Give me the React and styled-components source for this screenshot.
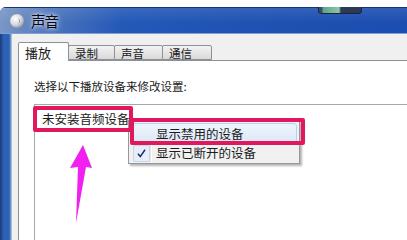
import styled, { createGlobalStyle } from "styled-components";

const GlobalStyle = createGlobalStyle`
  html, body {
    margin: 0;
    padding: 0;
    background: #ffffff;
    overflow: hidden;
  }
  body {
    font-family: "Noto Sans CJK SC", "Noto Sans", sans-serif;
    color: #1b1b1b;
  }
`;

const Page = styled.div`
  position: fixed;
  left: 0;
  top: 0;
  z-index: 1000;
  width: 407px;
  height: 240px;
  overflow: hidden;
  padding-top: 7px;
  box-sizing: border-box;
  background: #ffffff;
`;

const Window = styled.div`
  width: 407px;
  height: 233px;
  display: flex;
  flex-direction: column;
  border-top-left-radius: 6px;
  overflow: hidden;
  background: #1f52b0;
`;

const TitleBar = styled.div`
  position: relative;
  height: 27px;
  flex-shrink: 0;
  display: flex;
  align-items: center;
  gap: 6px;
  padding-left: 9px;
  background:
    linear-gradient(to bottom, rgba(255, 255, 255, 0.1) 0%, rgba(255, 255, 255, 0) 60%),
    linear-gradient(to right, #7a97c6 0%, #4a73bb 13%, #2459b8 30%, #1f52b3 60%, #1c4db0 100%);
  box-shadow: inset 0 1px 0 #16346e, inset 0 -1px 0 #7fa0d0;
`;

const TitleText = styled.span`
  font-size: 14.5px;
  letter-spacing: -1px;
  color: #0a0a12;
  text-shadow: 0 0 6px rgba(235, 240, 250, 0.95), 0 0 3px rgba(235, 240, 250, 0.9);
`;

const Thumb = styled.div`
  position: absolute;
  top: -1px;
  left: 318px;
  width: 42px;
  height: 6px;
  border-radius: 0 0 3px 3px;
  background: linear-gradient(to right, #3b4c66 0, #3b4c66 3px, #5aa58e 4px, #8fc4a6 20px, #2c3a55 22px, #2c3a55 100%);
  border: 1px solid #18243a;
`;

const Frame = styled.div`
  flex: 1;
  display: flex;
`;

const FrameSide = styled.div`
  width: 12px;
  flex-shrink: 0;
  background: linear-gradient(
    to right,
    #1b3a70 0,
    #24509a 2px,
    #2c63b9 4px,
    #2a61b8 9px,
    #7f9cc8 11px,
    #d9dde3 12px
  );
`;

const Body = styled.div`
  flex: 1;
  display: flex;
  flex-direction: column;
  background: #f0f0f0;
  padding: 8px 0 0 6px;
`;

const TabRow = styled.div`
  display: flex;
  align-items: flex-end;
  height: 18px;
  position: relative;
  z-index: 1;
`;

const Tab = styled.div`
  box-sizing: border-box;
  width: ${(p) => p.w}px;
  height: ${(p) => (p.active ? 19 : 15)}px;
  margin-bottom: ${(p) => (p.active ? -1 : 0)}px;
  margin-left: ${(p) => (p.first ? 0 : -1)}px;
  padding-left: 6px;
  display: flex;
  align-items: center;
  border: 1px solid #8d9097;
  border-bottom: ${(p) => (p.active ? "none" : "1px solid #8d9097")};
  border-radius: 2px 2px 0 0;
  font-size: ${(p) => (p.active ? 13 : 11.5)}px;
  background: ${(p) =>
    p.active ? "#ffffff" : "linear-gradient(to bottom, #f3f3f3 0%, #e6e6e6 50%, #d9d9d9 100%)"};
  position: relative;
  z-index: ${(p) => (p.active ? 2 : 1)};
`;

const Panel = styled.div`
  flex: 1;
  background: #ffffff;
  border-top: 1px solid #8d9097;
  border-left: 1px solid #8d9097;
  padding-left: 15px;
  display: flex;
  flex-direction: column;
`;

const Prompt = styled.div`
  margin-top: 17px;
  font-size: 11.5px;
  line-height: 16px;
  white-space: nowrap;
`;

const ListBox = styled.div`
  margin-top: 10px;
  flex: 1;
  border-top: 1px solid #a7a7a7;
  border-left: 1px solid #a7a7a7;
  padding: 5px 0 0 7px;
`;

const ListItem = styled.div`
  font-size: 12.5px;
  line-height: 18px;
  white-space: nowrap;
`;

const Highlight = styled.div`
  position: absolute;
  left: ${(p) => p.x}px;
  top: ${(p) => p.y}px;
  width: ${(p) => p.w}px;
  height: ${(p) => p.h}px;
  box-sizing: border-box;
  border: 4px solid #e2185c;
  border-radius: 2px;
  z-index: 5;
`;

const Menu = styled.div`
  position: absolute;
  left: 128px;
  top: 120px;
  width: 172px;
  height: 44px;
  box-sizing: border-box;
  padding: 2px;
  background: linear-gradient(
    to right,
    #f1f1f1 0,
    #f1f1f1 21px,
    #e2e3e3 21px,
    #e2e3e3 22px,
    #ffffff 22px,
    #ffffff 23px,
    #f1f1f1 23px
  );
  border: 1px solid #979797;
  box-shadow: 2px 2px 2px rgba(0, 0, 0, 0.3);
  z-index: 4;
  display: flex;
  flex-direction: column;
`;

const MenuItem = styled.div`
  position: relative;
  height: ${(p) => (p.hover ? 20 : 19)}px;
  box-sizing: border-box;
  display: flex;
  align-items: center;
  padding-left: 24px;
  font-size: 12.5px;
  white-space: nowrap;
  border: 1px solid ${(p) => (p.hover ? "#b4d0f2" : "transparent")};
  border-radius: 3px;
  background: ${(p) =>
    p.hover ? "linear-gradient(to bottom, #eef4fc 0%, #dde9f8 100%)" : "transparent"};
`;

const CheckBox = styled.span`
  position: absolute;
  left: 1px;
  top: 1px;
  width: 15px;
  height: 15px;
  border: 1px solid #c6d6ec;
  border-radius: 2px;
  background: #e6eef8;
  display: flex;
  align-items: center;
  justify-content: center;
`;

const Arrow = styled.svg`
  position: absolute;
  left: 0;
  top: 0;
  z-index: 6;
`;

function SpeakerIcon() {
  return (
    <svg width="16" height="16" viewBox="0 0 16 16">
      <defs>
        <radialGradient id="sph" cx="0.38" cy="0.35" r="0.7">
          <stop offset="0" stopColor="#ffffff" />
          <stop offset="0.55" stopColor="#d6dce4" />
          <stop offset="1" stopColor="#8893a3" />
        </radialGradient>
      </defs>
      <circle cx="8" cy="8" r="7.3" fill="url(#sph)" stroke="#7d8898" strokeWidth="0.6" />
      <path d="M9.5 5 Q12.5 8 9.5 11 Q10.8 8 9.5 5 Z" fill="#8c96a4" />
    </svg>
  );
}

const tabs = [
  { label: "播放", w: 51, active: true },
  { label: "录制", w: 47 },
  { label: "声音", w: 49 },
  { label: "通信", w: 50 },
];

export default function App() {
  return (
    <Page>
      <GlobalStyle />
      <Window>
        <TitleBar>
          <SpeakerIcon />
          <TitleText>声音</TitleText>
          <Thumb />
        </TitleBar>
        <Frame>
          <FrameSide />
          <Body>
            <TabRow>
              {tabs.map((t, i) => (
                <Tab key={t.label} w={t.w} active={t.active} first={i === 0}>
                  {t.label}
                </Tab>
              ))}
            </TabRow>
            <Panel>
              <Prompt>选择以下播放设备来修改设置:</Prompt>
              <ListBox>
                <ListItem>未安装音频设备</ListItem>
              </ListBox>
            </Panel>
          </Body>
        </Frame>
      </Window>

      <Menu>
        <MenuItem hover>显示禁用的设备</MenuItem>
        <MenuItem>
          <CheckBox>
            <svg width="11" height="11" viewBox="0 0 11 11">
              <path d="M2 5.8 L4.3 8.6 L9 1.8" fill="none" stroke="#1c2a6e" strokeWidth="1.5" />
            </svg>
          </CheckBox>
          显示已断开的设备
        </MenuItem>
      </Menu>

      <Highlight x={33} y={106} w={100} h={26} />
      <Highlight x={130} y={118} w={175} h={27} />

      <Arrow width="407" height="240" viewBox="0 0 407 240">
        <polygon
          points="83,145 92,168 86,167 76,223 78,167 70,168"
          fill="#f020f0"
        />
      </Arrow>
    </Page>
  );
}
